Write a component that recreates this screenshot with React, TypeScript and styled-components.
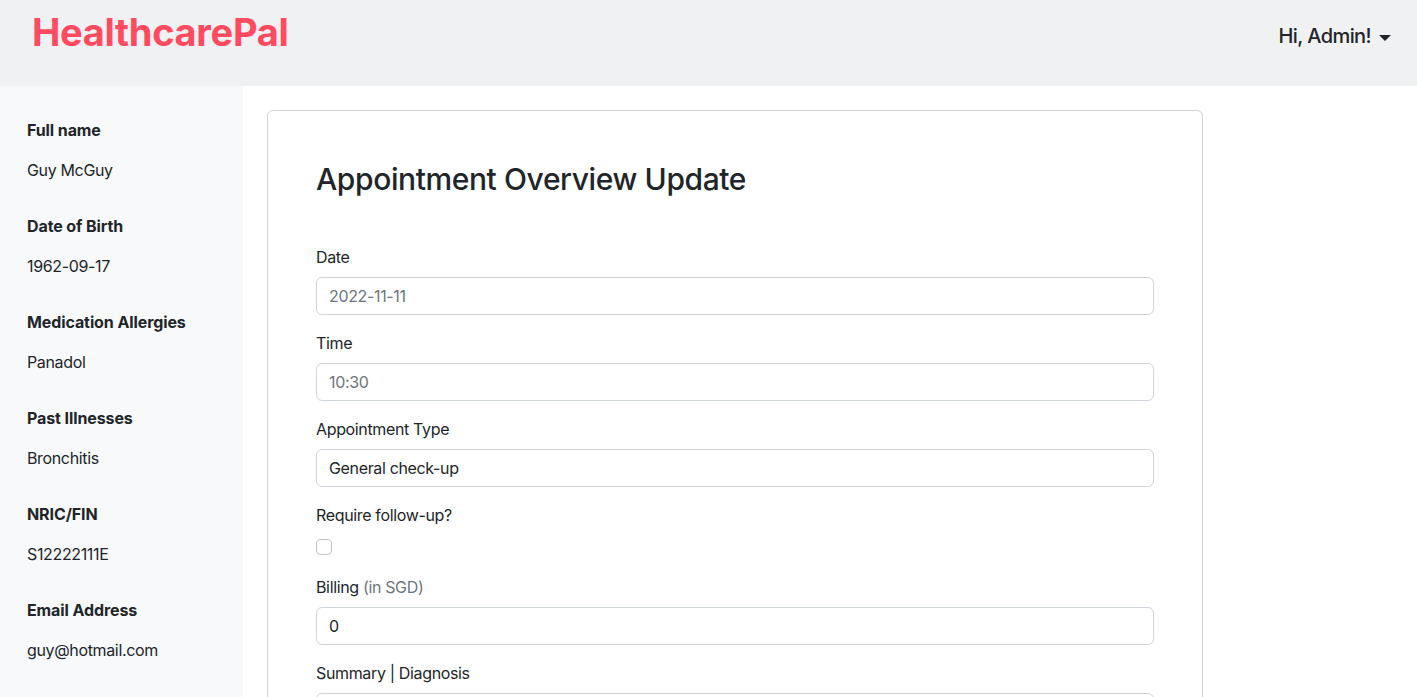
import React from "react";
import styled, { createGlobalStyle } from "styled-components";

const Global = createGlobalStyle`
  * { box-sizing: border-box; }
  html, body { margin: 0; padding: 0; }
  body {
    font-family: Inter, "Noto Sans", "Liberation Sans", sans-serif;
    font-size: 16px;
    line-height: 1.5;
    color: #212529;
    background: #ffffff;
    letter-spacing: -0.35px;
  }
`;

const Page = styled.div`
  display: flex;
  flex-direction: column;
  min-height: 697px;
`;

const Header = styled.header`
  height: 86px;
  background: #f0f1f3;
  display: flex;
  justify-content: space-between;
  align-items: flex-start;
  padding: 10px 26px 0 32px;
`;

const Logo = styled.div`
  font-size: 38px;
  font-weight: 700;
  line-height: 1.2;
  color: #ff4a5f;
  letter-spacing: -0.3px;
`;

const UserMenu = styled.button`
  margin-top: 14px;
  border: none;
  background: transparent;
  font-family: inherit;
  font-size: 20px;
  font-weight: 500;
  letter-spacing: -0.6px;
  color: #212529;
  padding: 0;
  display: flex;
  align-items: center;
  line-height: 1.2;
  cursor: pointer;
`;

const Caret = styled.span`
  display: inline-block;
  margin-left: 8px;
  margin-top: 3px;
  border-top: 6px solid #212529;
  border-left: 6px solid transparent;
  border-right: 6px solid transparent;
`;

const Body = styled.div`
  display: flex;
  flex: 1;
`;

const Sidebar = styled.aside`
  width: 243px;
  flex-shrink: 0;
  background: #f8f9fa;
  padding: 32px 27px;
`;

const InfoGroup = styled.div`
  margin-bottom: 32px;
`;

const InfoLabel = styled.div`
  font-weight: 700;
  letter-spacing: -0.1px;
  margin-bottom: 16px;
`;

const InfoValue = styled.div``;

const Main = styled.main`
  flex: 1;
  padding: 24px 24px 0 24px;
`;

const Card = styled.section`
  width: 936px;
  border: 1px solid #d2d3d5;
  border-radius: 6px;
  padding: 48px 48px 24px;
  background: #fff;
  min-height: 640px;
`;

const Title = styled.h2`
  margin: 2px 0 48px;
  font-size: 30px;
  font-weight: 500;
  letter-spacing: -0.4px;
  line-height: 1.2;
`;

const Field = styled.div`
  margin-bottom: 16px;
`;

const Label = styled.label`
  display: block;
  margin-bottom: 8px;
`;

const Muted = styled.span`
  color: #6c757d;
`;

const Input = styled.input<{ $muted?: boolean }>`
  display: block;
  width: 100%;
  height: 38px;
  padding: 6px 12px;
  font-family: inherit;
  font-size: 16px;
  letter-spacing: -0.35px;
  line-height: 1.5;
  color: ${(p) => (p.$muted ? "#6c757d" : "#212529")};
  background: #fff;
  border: 1px solid #ced4da;
  border-radius: 6px;
  outline: none;
`;

const TextArea = styled.textarea`
  display: block;
  width: 100%;
  height: 86px;
  padding: 6px 12px;
  font-family: inherit;
  font-size: 16px;
  border: 1px solid #ced4da;
  border-radius: 6px;
  resize: none;
`;

const CheckRow = styled.div`
  height: 24px;
  display: flex;
  align-items: flex-start;
`;

const Check = styled.span`
  display: block;
  margin-top: 4px;
  width: 16px;
  height: 16px;
  border: 1px solid #bfc4c9;
  border-radius: 4px;
  background: #fff;
`;

const info = [
  ["Full name", "Guy McGuy"],
  ["Date of Birth", "1962-09-17"],
  ["Medication Allergies", "Panadol"],
  ["Past Illnesses", "Bronchitis"],
  ["NRIC/FIN", "S12222111E"],
  ["Email Address", "guy@hotmail.com"],
];

export default function App() {
  return (
    <Page>
      <Global />
      <Header>
        <Logo>HealthcarePal</Logo>
        <UserMenu>
          Hi, Admin!<Caret />
        </UserMenu>
      </Header>
      <Body>
        <Sidebar>
          {info.map(([k, v]) => (
            <InfoGroup key={k}>
              <InfoLabel>{k}</InfoLabel>
              <InfoValue>{v}</InfoValue>
            </InfoGroup>
          ))}
        </Sidebar>
        <Main>
          <Card>
            <Title>Appointment Overview Update</Title>
            <Field>
              <Label>Date</Label>
              <Input $muted readOnly value="2022-11-11" />
            </Field>
            <Field>
              <Label>Time</Label>
              <Input $muted readOnly value="10:30" />
            </Field>
            <Field>
              <Label>Appointment Type</Label>
              <Input readOnly value="General check-up" />
            </Field>
            <Field>
              <Label>Require follow-up?</Label>
              <CheckRow>
                <Check />
              </CheckRow>
            </Field>
            <Field>
              <Label>
                Billing <Muted>(in SGD)</Muted>
              </Label>
              <Input readOnly value="0" />
            </Field>
            <Field>
              <Label>Summary | Diagnosis</Label>
              <TextArea readOnly />
            </Field>
          </Card>
        </Main>
      </Body>
    </Page>
  );
}
